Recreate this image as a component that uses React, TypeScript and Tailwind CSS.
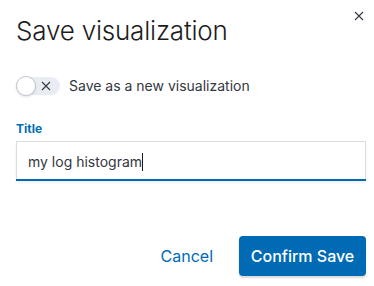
import React from 'react';

const App: React.FC = () => (
  <div className="relative w-[374px] h-[286px] bg-white" style={{ fontFamily: 'Inter, "Noto Sans", sans-serif' }}>
    {/* Close */}
    <button className="absolute right-[9px] top-[10px] w-[12px] h-[12px] flex items-center justify-center text-[#343741]">
      <svg width="10" height="10" viewBox="0 0 10 10" fill="none" stroke="currentColor" strokeWidth="1.1">
        <path d="M1 1 L9 9 M9 1 L1 9" />
      </svg>
    </button>

    <div className="flex flex-col pl-[16px] pr-[8px] pt-[13px]">
      {/* Header */}
      <h1 className="text-[26px] leading-[36px] font-light text-[#1a1c21] tracking-[-0.2px]">Save visualization</h1>

      {/* Switch */}
      <div className="flex items-center gap-[9px] mt-[26px]">
        <div className="relative w-[44px] h-[18px] rounded-full bg-[#e9edf3] flex items-center">
          <div className="absolute left-0 top-[-1px] w-[20px] h-[20px] rounded-full bg-white border border-[#c2c8d2] shadow-sm" />
          <svg className="absolute left-[25px] top-[4px]" width="10" height="10" viewBox="0 0 10 10" fill="none" stroke="#343741" strokeWidth="1.1">
            <path d="M1 1 L9 9 M9 1 L1 9" />
          </svg>
        </div>
        <span className="text-[14px] text-[#343741]">Save as a new visualization</span>
      </div>

      {/* Field */}
      <label className="mt-[25px] text-[12px] font-bold text-[#006bb4] leading-[16px]">Title</label>
      <div className="mt-[4px] h-[40px] border border-[#d9dce1] border-b-0 bg-white flex items-center px-[11px] shadow-[0_2px_3px_rgba(0,0,0,0.06)] relative">
        <span className="text-[14px] text-[#343741]">my log histogram</span>
        <span className="w-[1px] h-[18px] bg-[#1a1c21]" />
        <div className="absolute left-[-1px] right-[-1px] bottom-0 h-[2px] bg-[#006bb4]" />
      </div>

      {/* Footer */}
      <div className="flex justify-end items-center gap-[26px] mt-[55px]">
        <button className="text-[16px] text-[#006bb4]">Cancel</button>
        <button className="w-[127px] h-[40px] rounded-[4px] bg-[#006bb4] text-white text-[16px] font-medium shadow-[0_2px_2px_rgba(0,0,0,0.15)]">
          Confirm Save
        </button>
      </div>
    </div>
  </div>
);

export default App;
